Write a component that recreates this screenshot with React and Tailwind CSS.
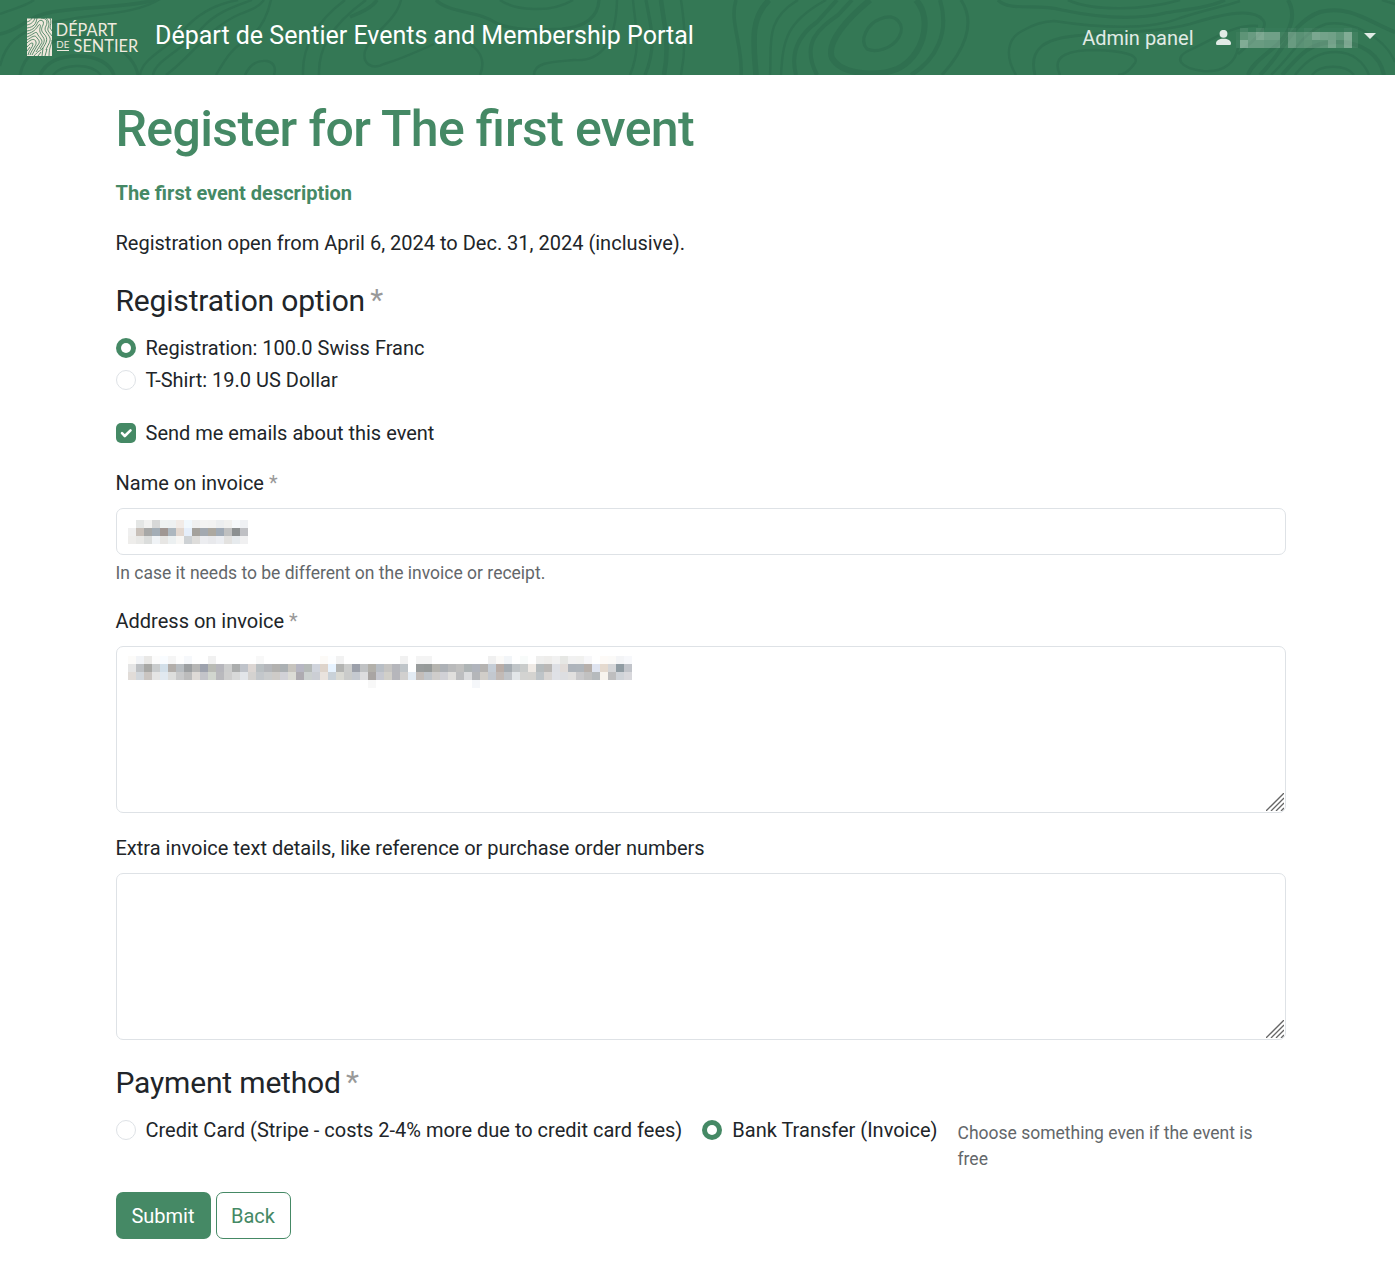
import React from "react";

const NAME_ROWS = [
  ". e4e6e5 f2f2f1 d7d8d8 eff2f2 eef1f2 f1ebe7 f1f8fd f0f0f0 f4f4f3 f3f3f2 eceeef f1f1ef f6f9fb eff1f4",
  "efefef c8c0b9 a7a8a7 a3adb6 a09793 adb7bf e2d7cf e5eefa a4a19c a3a9b0 aca8a0 a0aab5 bfc0c0 8c9091 bfc0c4",
  "eeedeb e8e8e6 dbdddc f0f3f6 e7e6e4 ecf0f1 f7f6f4 ced2d5 dedddb ecedf0 e8e9ec eceef2 e3e2e0 e6eaed f0f0f1",
];

const ADDRESS_ROWS = [
  "fcfbf9 f1f3f6 e9e8e6 fcfcfc f9fcff f5f5f5 fefefe f6f8fb . . f1f1f1 . . . . . f8f8f8 . . . . . . . fcfaf7 fdfeff f2f2f2 . . . . . . . f1f1f1 . f4f4f4 f4f4f4 . . . . . . . f0f0f0 fbfaf8 f2f5f8 . f8fbfa . efefee eeedeb f1f1f1 e6e7e4 f1f1f1 f1f1ef f7f7f9 . fdfaf7 fbfaf8 f3f4f6 f7f8fb",
  "e5e5e5 bdc0c3 a8a8a5 c9cccd d2dfe9 b2aeaa b7bcc0 9c9fa1 b6b6b5 9da2ad b9bbb5 b6b6bc cccdcd abadad bfc3ca dcd6d3 b9bfc2 b4b6ba b2b1af abb0b3 c7c4be b6b6c2 b5bab8 d0d4dc ded4cb e7f3ff b3b4b2 cbcccb 9ca0aa c0c2c4 b2b0aa b8bec5 c5c4c2 b5b6bb bfc5c9 . 989c9c 969a99 b5b4af adb1b6 b9babb c0c0bf aeb4b5 b0b4bc b5b3b1 c5cdd6 b9ada7 a5acb2 c0c5c8 c9cccb efeae5 b5bbbd bab8b6 dee0e5 e1dcd9 aeb4bb afb5bb b7b0ab dfe4f0 e5dacf d5d6d8 909ca3 c1c4ca",
  "e1dcd8 d2d7dc cac5c1 e5e5e4 e1e9f0 dddedd c8c9ca bcbcbc dedad6 c3c4c9 d1d6cf b9b9bd cecece d8d9d9 e2e5e9 d4d2d0 c3c7cb cacccd cecbc8 d2d2d7 dcdcd6 aeabb1 ccd1d0 cbced4 e9e3de c9d1d8 d9d9d3 cacbca c5c9d0 dddddf a9a5a3 c6c8d0 d1cfc9 b6b6bb d1d0cf e3ebf3 c3bdb9 c0c5ca cfcdcb d1d1d6 e0dfdd bdbec0 dbdcde b4b6b9 d1cec9 c3c8cf c2bab6 c0c4c9 e2e6e9 d3d3d1 d4d3d0 bec4c8 d8d5d3 dfe1e6 dddee1 e1e0df c9c9cb c1c1c1 b6babd f8f4ee bebebf cfd3d8 d8d8dc",
  ". . . . . . . . . . . . . . . . . . . . . . . . . . . . . . f8f8f8 . . . . . . . . . . . . f5f7fa . . . . . . . . . . . . . . . . . . .",
];

const USER_COLS = [
  [4, 0, 4, 6],
  [8, 10, 24, 44],
  [8, 2, 30, 30],
  [8, 10, 42, 30],
  [8, 2, 34, 28],
  [8, 2, 34, 28],
  [8, 2, 8, 8],
  [8, 6, 30, 30],
  [8, 2, 22, 22],
  [8, 6, 26, 24],
  [8, 4, 40, 22],
  [8, 2, 36, 24],
  [8, 2, 34, 38],
  [8, 2, 26, 20],
  [8, 6, 44, 42],
  [6, 2, 8, 8],
];

function Mosaic({ rows }) {
  const cells = rows.map((r) => r.split(" "));
  return (
    <svg width={cells[0].length * 8} height={rows.length * 8} shapeRendering="crispEdges" aria-hidden="true">
      {cells.map((row, y) =>
        row.map((c, x) =>
          c === "." ? null : (
            <rect key={x + "-" + y} x={x * 8} y={y * 8} width="8" height="8" fill={"#" + c} />
          )
        )
      )}
    </svg>
  );
}

function UserMosaic() {
  let x = 0;
  return (
    <svg className="ml-[5px] shrink-0" width="122" height="20" shapeRendering="crispEdges" aria-hidden="true">
      {USER_COLS.map(([w, a, b, c], i) => {
        const left = x;
        x += w;
        return (
          <g key={i} fill="#e4eee8">
            <rect x={left} y="0" width={w} height="4" opacity={a / 100} />
            <rect x={left} y="4" width={w} height="8" opacity={b / 100} />
            <rect x={left} y="12" width={w} height="8" opacity={c / 100} />
          </g>
        );
      })}
    </svg>
  );
}

// Contour lines behind the navigation bar
function Contours() {
  return (
    <svg className="absolute inset-0" width="1395" height="75" fill="none" stroke="#2f7050" strokeWidth="2.4" aria-hidden="true">
      <path d="M0 14 C12 9 24 7 34 0" />
      <path d="M0 34 C20 30 28 16 52 12 C90 6 125 8 155 0" strokeWidth="3.5" />
      <path d="M0 66 C6 42 18 34 40 26 C80 12 130 18 160 -1" />
      <path d="M20 75 C24 54 40 44 66 38 C100 31 134 52 138 75" strokeWidth="3" />
      <path d="M40 75 C46 62 60 56 78 56 C98 56 110 64 114 75" strokeWidth="3.5" />
      <path d="M53 75 C62 64 90 62 101 75" />
      <path d="M140 75 C142 58 168 48 182 32 C194 17 210 5 238 0" />
      <path d="M153 75 C155 60 186 48 202 28 C216 12 236 6 252 0" />
      <path d="M166 75 C190 58 208 28 240 14 C250 10 258 8 264 0" />
      <path d="M216 75 C225 60 230 50 246 40 C256 34 266 22 271 0" />
      <path d="M245 75 C250 64 258 60 267 61 C275 63 276 69 274 75" />
      <path d="M303 75 C302 50 313 24 345 0" />
      <path d="M319 75 C318 50 330 26 366 0" />
      <path d="M350 17 C360 13 372 8 377 0" strokeWidth="3.5" />
      <path d="M401 0 C396 22 370 34 365 51 C362 64 372 70 384 64 C398 60 412 54 434 44" />
      <path d="M436 0 C450 14 478 10 498 24 C516 31 540 30 562 29 C584 27 598 18 599 0" strokeWidth="3.2" />
      <path d="M500 0 C514 10 550 14 573 0" />
      <path d="M456 40 C474 42 488 56 480 75" />
      <path d="M534 75 C534 62 552 62 574 60 C600 62 616 44 617 0" />
      <path d="M630 75 C642 46 635 25 633 0" />
      <path d="M645 75 C658 44 650 24 646 0" strokeWidth="3.2" />
      <path d="M664 75 C670 44 664 24 661 0" strokeWidth="4.5" />
      <path d="M681 75 C687 44 684 20 681 0" />
      <path d="M741 75 C743 45 729 22 736 0" strokeWidth="3.5" />
      <path d="M756 75 C754 45 749 20 769 0" strokeWidth="5.5" />
      <path d="M770 75 C772 44 764 20 798 0" />
      <path d="M781 75 C783 40 786 22 826 0" />
      <path d="M796 75 C789 48 803 32 817 22 L837 0" strokeWidth="4" />
      <path d="M817 75 C800 42 820 28 838 15 L852 0" strokeWidth="4" />
      <path d="M870 0 C848 18 826 42 832 58 C842 76 880 76 897 69 C922 58 934 20 916 0" strokeWidth="6" />
      <path d="M867 49 C859 40 867 24 880 19 C896 12 906 25 899 37 C892 49 876 53 867 49 Z" strokeWidth="3.2" />
      <path d="M940 0 C950 32 936 60 911 75" strokeWidth="4" />
      <path d="M961 0 C977 24 963 52 942 75" strokeWidth="3" />
      <path d="M998 0 C1010 12 1036 3 1062 10 C1100 18 1136 20 1165 13 C1190 9 1210 7 1225 0" strokeWidth="3.2" />
      <path d="M1068 0 C1094 12 1145 10 1180 0" strokeWidth="2.6" />
      <path d="M1016 75 C1004 55 1008 38 1022 31 C1034 24 1042 22 1054 21 C1100 28 1150 30 1180 18 C1204 10 1222 7 1240 1" />
      <path d="M1035 75 C1028 48 1046 39 1074 36 C1112 31 1152 34 1190 24 C1216 16 1252 6 1263 20 C1270 29 1250 43 1238 54" strokeWidth="2.8" />
      <path d="M1060 75 C1050 54 1072 50 1096 50 C1120 51 1140 54 1135 63 C1130 70 1124 75 1118 75" />
      <path d="M1238 48 C1236 60 1226 73 1203 71 C1180 68 1172 58 1190 50 C1216 38 1234 24 1258 26" />
      <path d="M1288 0 C1296 14 1292 30 1278 44 C1264 56 1252 64 1248 75" strokeWidth="4" />
      <path d="M1260 75 C1284 52 1292 22 1320 12 C1350 4 1372 24 1395 32" strokeWidth="4" />
      <path d="M1271 75 C1294 54 1302 32 1326 24 C1350 20 1384 36 1395 62" />
      <path d="M1282 75 C1302 52 1312 42 1336 42 C1364 42 1380 56 1384 75" strokeWidth="4" />
      <path d="M1295 75 C1308 58 1320 52 1336 52 C1352 52 1364 62 1369 75" />
      <path d="M1312 75 C1320 64 1346 64 1354 75" />
      <path d="M1382 0 L1395 4" />
    </svg>
  );
}

function Logo() {
  return (
    <svg className="mb-[1px] shrink-0 overflow-visible" width="112" height="38" viewBox="27 18 112 38" fill="none" stroke="#efeadf" aria-label="Départ de Sentier">
      <rect x="27" y="18.5" width="25" height="37.5" fill="#efe8dc" stroke="none" />
      <g stroke="#347653" strokeWidth="0.8">
        <path d="M27 22 C30 21 31 20 32 18M27 25 C32 24 34 21 35 18M27 28 C34 27 36 24 37 18M27 31 C34 30 36 26 38 22 C40 19 45 20 43 25 C41 29 41 31 44 34 C49 39 46 43 43 48" />
        <path d="M27 34 C34 32 36 29 38 26 C40 23 41 25 40 28 C39 32 41 34 43 37 C46 41 43 44 40 49" />
        <path d="M27 37 C34 34 36 31 37 33 C39 38 44 40 41 44 L36 52M27 40 C32 37 35 34 37 38 C40 41 40 43 37 46 L32 55" />
        <path d="M27 43 C31 39 35 38 36 42 C37 45 32 49 30 55M27 47 C30 43 33 42 33 44 C33 47 29 50 28 55M27 51 L30 47" />
        <path d="M41 18 C47 18 48 22 46 26 C43 31 48 33 50 38 C51 42 47 46 46 50M46 18 C50 22 49 25 48 28 C47 31 50 33 52 36M50 18 C52 22 50 25 50 28 L52 31M52 40 C52 44 49 47 49 56M34 56 C38 51 40 51 43 48 L42 56M38 56 L41 52M45 56 L47 49" />
      </g>
      <g fill="#efeadf" stroke="none" fontFamily="Lato, sans-serif">
        <text x="55.8" y="35.6" fontSize="17" fontWeight="400" textLength="61" lengthAdjust="spacingAndGlyphs">DÉPART</text>
        <text x="56.3" y="47.8" fontSize="9.8" fontWeight="400" textLength="13" lengthAdjust="spacingAndGlyphs">DE</text>
        <text x="73.6" y="51.8" fontSize="17" fontWeight="400" textLength="64.5" lengthAdjust="spacingAndGlyphs">SENTIER</text>
      </g>
      <path d="M57 50.5 H69" strokeWidth="1" />
    </svg>
  );
}

function Radio({ checked }) {
  return checked ? (
    <span className="flex size-5 shrink-0 items-center justify-center rounded-full bg-[#458965]">
      <span className="size-[10px] rounded-full bg-white" />
    </span>
  ) : (
    <span className="size-5 shrink-0 rounded-full border border-[#dee2e6] bg-white" />
  );
}

function Option({ checked, children }) {
  return (
    <label className="flex h-[30px] items-center gap-[10px] whitespace-nowrap">
      <Radio checked={checked} />
      <span>{children}</span>
    </label>
  );
}

function Required() {
  return <span className="text-[#999]">*</span>;
}

function SectionTitle({ children }) {
  return (
    <h2 className="mt-[25px] text-[30px] leading-[36px] tracking-[-0.17px]">
      {children} <span className="relative -top-px -ml-[2px] text-[#999]">*</span>
    </h2>
  );
}

function TextBox({ children }) {
  return (
    <div className="relative mt-[10px] h-[167px] w-full rounded-[7px] border border-[#dee2e6] bg-white pt-[9px] pl-[11px]">
      {children}
      <svg className="absolute right-[1px] bottom-[1px]" width="18" height="18" stroke="#666" strokeWidth="1.3" aria-hidden="true">
        <path d="M0 18 L18 0M5 18 L18 5M10 18 L18 10M15 18 L18 15" />
      </svg>
    </div>
  );
}

export default function App() {
  return (
    <div className="min-h-[1264px] w-[1395px] bg-white font-['Roboto',sans-serif] text-[20px] leading-[30px] text-[#212529]">
      <header className="relative h-[75px] overflow-hidden bg-[#347855]">
        <Contours />
        <nav className="relative flex h-full items-center pl-[27px] pr-[19px]">
          <Logo />
          <span className="mb-[3px] ml-4 text-[25px] whitespace-nowrap text-white">Départ de Sentier Events and Membership Portal</span>
          <span className="ml-auto text-[#e1ebe6]">Admin panel</span>
          <div className="ml-[22.5px] flex items-center">
            <svg width="15" height="15" viewBox="0 0 15 15" fill="#e1ebe6" aria-hidden="true">
              <circle cx="7.5" cy="3.8" r="3.9" />
              <path d="M0 13.7 C0 10.6 3 8.8 7.5 8.8 S15 10.6 15 13.7 Q15 15 13.8 15 H1.2 Q0 15 0 13.7Z" />
            </svg>
            <UserMosaic />
            <svg className="mb-[3px] ml-[6px]" width="12" height="6" fill="#e1ebe6" aria-hidden="true">
              <path d="M0 0 H12 L6 6Z" />
            </svg>
          </div>
        </nav>
      </header>

      <main className="ml-[115.5px] w-[1170px] pt-6">
        <h1 className="text-[50px] leading-[60px] font-medium tracking-[-0.63px] text-[#458965]">
          Register for The <span className="tracking-normal">fi</span>rst event
        </h1>
        <p className="mt-[19px] font-bold text-[#458965]">The first event description</p>
        <p className="mt-5">Registration open from April 6, 2024 to Dec. 31, 2024 (inclusive).</p>

        <SectionTitle>Registration option</SectionTitle>
        <div className="mt-[14px] flex flex-col gap-[2px]">
          <Option checked>Registration: 100.0 Swiss Franc</Option>
          <Option>T-Shirt: 19.0 US Dollar</Option>
        </div>

        <label className="mt-[23px] flex h-[30px] items-center gap-[10px]">
          <span className="flex size-5 items-center justify-center rounded-[5px] bg-[#458965]">
            <svg width="20" height="20" viewBox="0 0 20 20" fill="none" stroke="#fff" strokeWidth="2.6" strokeLinecap="round" strokeLinejoin="round" aria-hidden="true">
              <path d="M6 10.2 L8.8 13 L14.5 7.4" />
            </svg>
          </span>
          <span>Send me emails about this event</span>
        </label>

        <div className="mt-5">Name on invoice <Required /></div>
        <div className="mt-[10px] h-[47px] rounded-[7px] border border-[#dee2e6] pt-[11px] pl-[11px]">
          <Mosaic rows={NAME_ROWS} />
        </div>
        <p className="mt-[5px] text-[17.5px] leading-[26px] text-[#63676a]">In case it needs to be different on the invoice or receipt.</p>

        <div className="mt-5">Address on invoice <Required /></div>
        <TextBox>
          <Mosaic rows={ADDRESS_ROWS} />
        </TextBox>

        <div className="mt-5">Extra invoice text details, like reference or purchase order numbers</div>
        <TextBox />

        <SectionTitle>Payment method</SectionTitle>
        <div className="mt-[14px] flex items-start">
          <Option>Credit Card (Stripe - costs 2-4% more due to credit card fees)</Option>
          <div className="ml-5">
            <Option checked>Bank Transfer (Invoice)</Option>
          </div>
          <p className="mt-[5px] ml-5 flex-1 text-[17.5px] leading-[26px] text-[#63676a]">Choose something even if the event is free</p>
        </div>

        <div className="mt-5 flex gap-[5px]">
          <button className="h-[47px] w-[95px] rounded-[7px] bg-[#458965] text-white">Submit</button>
          <button className="h-[47px] w-[75px] rounded-[7px] border border-[#458965] bg-white text-[#458965]">Back</button>
        </div>
      </main>
    </div>
  );
}
